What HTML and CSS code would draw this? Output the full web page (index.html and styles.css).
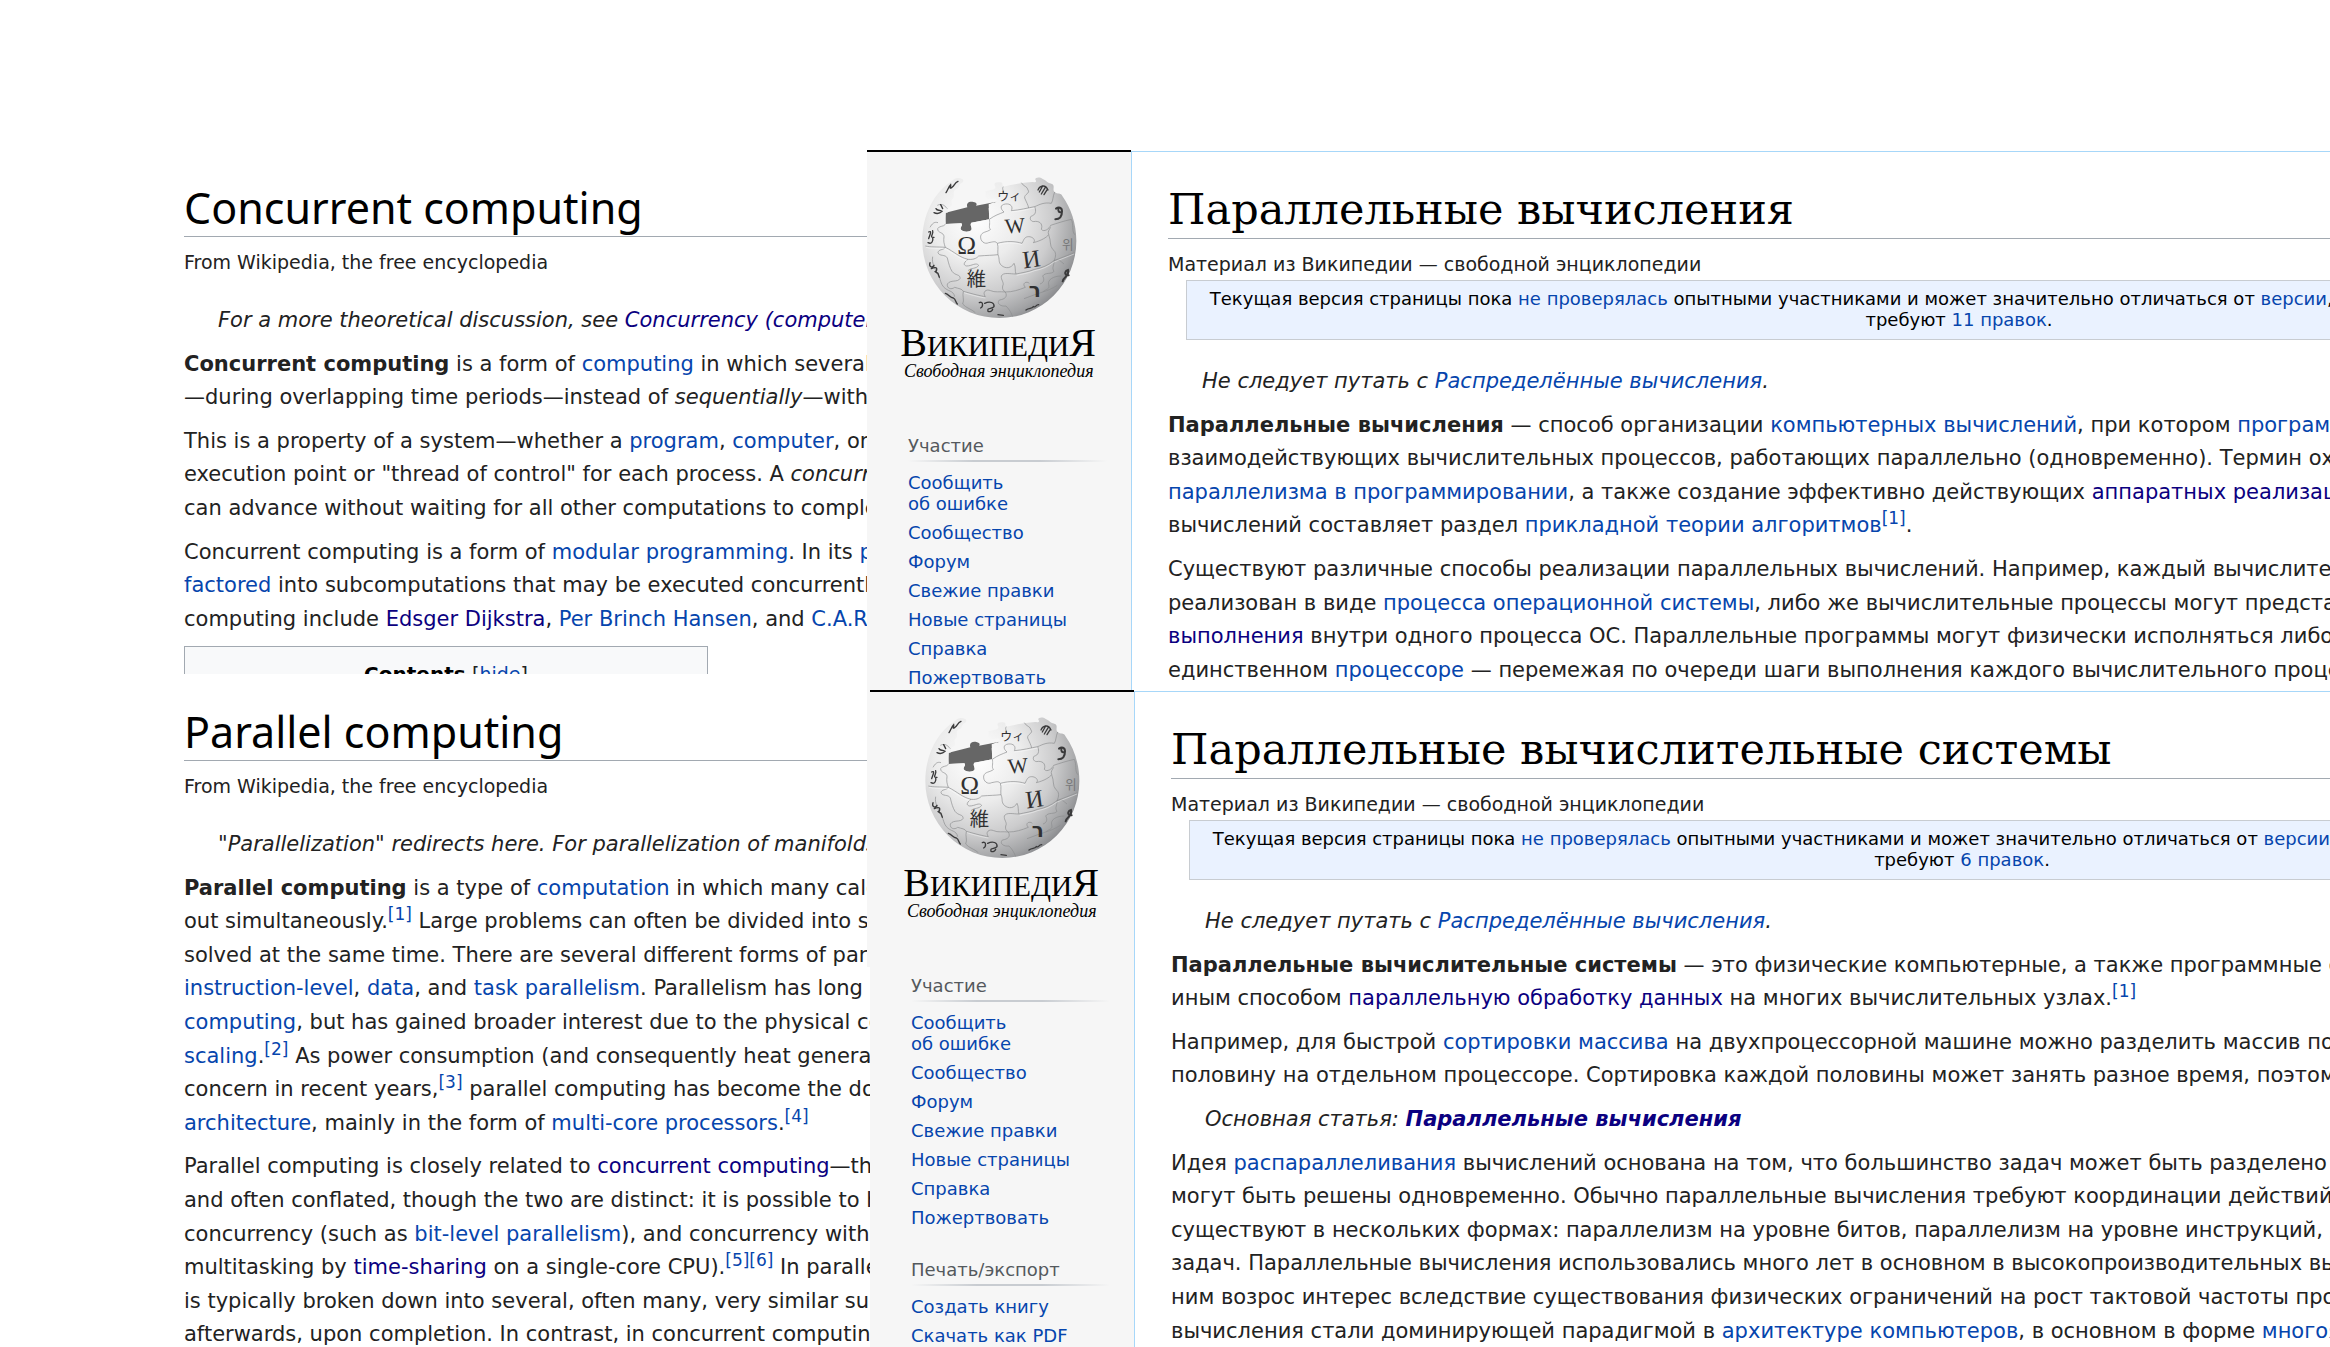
FILE: index.html
```html
<!DOCTYPE html>
<html lang="en">
<head>
<meta charset="utf-8">
<title>Concurrent and parallel computing: English and Russian articles</title>
<link rel="stylesheet" href="styles.css">
</head>
<body>
<svg class="defs" aria-hidden="true">
  <defs>
    <radialGradient id="ball" gradientUnits="userSpaceOnUse" cx="345" cy="235" r="330">
      <stop offset="0" stop-color="#ffffff"/>
      <stop offset=".4" stop-color="#ececec"/>
      <stop offset=".7" stop-color="#cccccd"/>
      <stop offset=".92" stop-color="#a2a3a5"/>
      <stop offset="1" stop-color="#8c8d90"/>
    </radialGradient>
    <symbol id="logo" viewBox="117 108 594 612">
      <path fill="#666" d="M257 218L322 202C318 190 326 184 340 186C350 188 352 192 348 197L410 185L386 205L388 238L334 248C328 256 338 262 334 270C328 278 306 276 302 268C300 260 310 256 304 250L257 252Z"/>
      <path fill="url(#ball)" d="M308 118C296 111 284 113 276 123C222 157 187 225 187 303A231 231 0 0 0 649 303C649 251 633 204 607 168C604 158 592 163 584 156C575 148 588 136 574 131C562 129 562 124 548 117C538 109 524 113 526 119C532 127 524 127 516 126C488 128 458 133 430 140C424 134 432 128 420 127C406 125 400 130 405 138C409 147 402 149 376 154C380 163 370 174 384 177C394 180 408 170 410 181C410 188 404 188 398 188L386 193L388 238L334 248C328 256 338 262 334 270C328 278 306 276 302 268C300 260 310 256 304 250L257 252C254 240 256 226 257 218C270 220 258 206 270 200C284 196 268 184 278 176C288 168 274 156 288 148C300 146 294 134 304 130C310 126 312 122 308 118Z"/>
      <g fill="none" stroke="#8b8c8e" stroke-width="2">
        <path d="M257 252C250 262 238 256 233 266C232 280 252 276 252 290C250 302 252 312 256 322C250 332 236 326 234 338C238 350 256 342 262 354C266 372 270 384 276 394"/>
        <path d="M196 318C212 322 230 320 256 322C284 336 298 352 324 358C344 360 352 352 356 348C380 346 398 346 414 344"/>
        <path d="M388 238C392 252 384 262 392 268C380 278 366 274 362 288C360 304 374 314 386 308C398 306 406 302 412 310C416 322 412 334 414 344C420 358 414 366 424 376C438 388 454 384 462 370C468 380 464 394 468 402"/>
        <path d="M388 238C404 226 418 222 432 216C420 206 420 194 436 192C452 190 460 200 454 212C480 210 502 204 524 200C538 194 552 186 574 190"/>
        <path d="M524 200C530 214 526 226 514 228C506 236 514 248 526 244C544 244 548 256 544 268C552 278 568 266 572 256C590 250 608 244 634 238"/>
        <path d="M412 310C440 302 468 304 486 310C492 298 494 290 506 290C520 290 528 302 520 308C544 302 560 292 566 284C562 276 568 268 572 262"/>
        <path d="M566 284C574 304 568 316 578 328C590 336 588 350 582 362C584 374 574 382 582 394C574 404 556 396 548 408C554 418 552 428 540 432"/>
        <path d="M468 402C486 398 504 396 524 388C546 384 564 376 582 362C602 354 618 348 644 338"/>
        <path d="M324 358C312 366 308 376 320 378C336 378 348 366 356 376C348 388 334 382 324 392M276 394C286 408 302 402 300 416C292 428 272 418 262 432C260 446 274 450 284 442C296 446 306 446 310 454"/>
        <path d="M468 402C450 402 430 396 424 408C422 420 434 428 428 438C426 448 430 452 436 456C458 456 476 450 496 442C484 430 500 422 508 430"/>
        <path d="M310 454C338 462 362 468 376 470C366 456 378 446 392 452C404 458 420 454 436 456C444 470 434 478 418 480C408 492 424 500 438 498C450 510 454 520 458 530"/>
        <path d="M310 454C306 468 314 480 308 492C320 506 334 506 346 518M430 140C424 148 434 154 430 162M484 128C490 140 502 138 504 150C512 160 492 162 494 174C500 188 504 194 506 204M574 190C580 180 578 170 584 156M232 196C244 190 252 194 262 206M210 262C216 252 222 244 234 248M218 350C214 372 226 380 228 398C244 414 238 424 250 440C264 456 280 450 284 470M604 408C582 408 562 418 566 434C570 448 560 446 548 456"/>
        <path d="M582 362C596 356 602 364 612 372M634 238C642 256 634 270 644 284M492 476C510 468 528 464 548 456C562 452 576 446 592 436"/>
      </g>
      <g fill="none" stroke="#fff" stroke-width="2" opacity=".65">
        <path d="M198 322C212 326 230 324 254 326C282 340 296 356 322 362M390 242C396 254 388 264 396 270M414 314C440 306 468 308 486 314M470 406C486 402 504 400 524 392C546 388 564 380 582 366C602 358 618 352 642 342M312 458C338 466 362 472 376 474M454 216C480 214 502 208 524 204"/>
      </g>
      <g fill="none" stroke="#3a3a3b" stroke-width="4" stroke-linecap="round">
        <path d="M258 158C264 148 266 140 272 134C274 142 266 148 276 142C284 136 284 128 294 124"/>
        <path d="M222 218C230 222 238 222 246 214C238 208 232 214 228 206M242 194L248 206"/>
        <path d="M206 276C218 270 208 288 206 296M218 272C222 282 206 294 222 292M204 308C216 314 220 302 218 292"/>
        <path d="M210 368C206 380 216 386 222 376M214 386C222 382 232 380 230 390C228 400 218 390 234 400L238 412"/>
        <path d="M256 460C266 462 270 474 280 474C288 478 286 486 292 492"/>
        <path d="M358 488C370 482 370 500 362 504M374 490C390 482 404 488 402 500C396 508 380 502 384 514C390 516 396 514 398 508"/>
        <path d="M538 156L548 138M544 162L556 142M552 164L562 148M534 150C540 136 556 132 564 150"/>
        <path stroke-width="6" d="M588 206C596 200 606 202 606 214C606 230 600 238 586 238M596 204C592 214 598 218 604 216"/>
        <path stroke-width="6" d="M608 424C610 412 618 416 620 404C612 402 616 392 624 390C626 400 620 406 626 406"/>
        <path d="M498 510C508 502 514 508 520 500C528 504 526 494 536 494M414 524L430 526"/>
      </g>
      <g class="logo-glyphs" fill="#303031">
        <text x="292" y="341" font-size="76">Ω</text>
        <text x="434" y="279" font-size="64" transform="rotate(-5 465 255)">W</text>
        <text x="488" y="382" font-size="74" transform="rotate(-8 515 358)">И</text>
        <text class="logo-cjk" x="320" y="438" font-size="58">維</text>
        <text class="logo-cjk" x="412" y="182" font-size="36">ウィ</text>
        <text class="logo-sans" x="506" y="470" font-size="60">ר</text>
        <text class="logo-kr" x="606" y="326" font-size="38" fill="#77787a">위</text>
      </g>
      <g class="logo-name">
        <text x="121" y="647" font-size="120">В<tspan font-size="88">ИКИПЕДИ</tspan>Я</text>
        <text class="logo-motto" x="132" y="711" font-size="54">Свободная энциклопедия</text>
      </g>
    </symbol>
  </defs>
</svg>

<main class="board">
  <div class="column column-en">
    <article class="capture capture-en capture-first">
      <h1>Concurrent computing</h1>
      <p class="source">From Wikipedia, the free encyclopedia</p>
      <p class="hatnote">For a more theoretical discussion, see <a class="seen" href="#">Concurrency (computer science)</a>.</p>
      <p><b>Concurrent computing</b> is a form of <a href="#">computing</a> in which several<br>
      —during overlapping time periods—instead of <i>sequentially</i>—with<br></p>
      <p>This is a property of a system—whether a <a href="#">program</a>, <a href="#">computer</a>, or<br>
      execution point or "thread of control" for each process. A <i>concurrent</i><br>
      can advance without waiting for all other computations to complete.</p>
      <p>Concurrent computing is a form of <a href="#">modular programming</a>. In its <a href="#">paradigm</a><br>
      <a href="#">factored</a> into subcomputations that may be executed concurrently.<br>
      computing include <a class="seen" href="#">Edsger Dijkstra</a>, <a href="#">Per Brinch Hansen</a>, and <a href="#">C.A.R. Hoare</a>.</p>
      <div class="toc"><b>Contents</b> <span>[<a href="#">hide</a>]</span></div>
    </article>
    <article class="capture capture-en capture-last">
      <h1>Parallel computing</h1>
      <p class="source">From Wikipedia, the free encyclopedia</p>
      <p class="hatnote">"Parallelization" redirects here. For parallelization of manifolds,</p>
      <p><b>Parallel computing</b> is a type of <a href="#">computation</a> in which many calculations<br>
      out simultaneously.<sup><a href="#">[1]</a></sup> Large problems can often be divided into smaller<br>
      solved at the same time. There are several different forms of parallel<br>
      <a href="#">instruction-level</a>, <a href="#">data</a>, and <a href="#">task parallelism</a>. Parallelism has long<br>
      <a href="#">computing</a>, but has gained broader interest due to the physical constraints<br>
      <a href="#">scaling</a>.<sup><a href="#">[2]</a></sup> As power consumption (and consequently heat generation)<br>
      concern in recent years,<sup><a href="#">[3]</a></sup> parallel computing has become the dominant<br>
      <a href="#">architecture</a>, mainly in the form of <a href="#">multi-core processors</a>.<sup><a href="#">[4]</a></sup></p>
      <p>Parallel computing is closely related to <a class="seen" href="#">concurrent computing</a>—they<br>
      and often conflated, though the two are distinct: it is possible to have<br>
      concurrency (such as <a href="#">bit-level parallelism</a>), and concurrency without<br>
      multitasking by <a class="seen" href="#">time-sharing</a> on a single-core CPU).<sup><a href="#">[5]</a><a href="#">[6]</a></sup> In parallel<br>
      is typically broken down into several, often many, very similar subtasks<br>
      afterwards, upon completion. In contrast, in concurrent computing,</p>
    </article>
  </div>

  <div class="column column-ru" lang="ru">
    <section class="capture capture-ru capture-first">
      <nav class="side" aria-label="Участие">
        <svg class="logo" role="img" aria-label="Википедия"><use href="#logo"/></svg>
        <h2>Участие</h2>
        <ul>
          <li><a href="#">Сообщить<br>об ошибке</a></li>
          <li><a href="#">Сообщество</a></li>
          <li><a href="#">Форум</a></li>
          <li><a href="#">Свежие правки</a></li>
          <li><a href="#">Новые страницы</a></li>
          <li><a href="#">Справка</a></li>
          <li><a href="#">Пожертвовать</a></li>
        </ul>
      </nav>
      <article class="content">
        <h1>Параллельные вычисления</h1>
        <p class="source">Материал из Википедии — свободной энциклопедии</p>
        <div class="notice">Текущая версия страницы пока <a href="#">не проверялась</a> опытными участниками и может значительно отличаться от <a href="#">версии</a>, проверенной 25 марта 2017; проверки<br>требуют <a href="#">11 правок</a>.</div>
        <p class="hatnote">Не следует путать с <a href="#">Распределённые вычисления</a>.</p>
        <p><b>Параллельные вычисления</b> — способ организации <a href="#">компьютерных вычислений</a>, при котором <a href="#">программы</a><br>
        взаимодействующих вычислительных процессов, работающих параллельно (одновременно). Термин охватывает<br>
        <a href="#">параллелизма в программировании</a>, а также создание эффективно действующих <a class="seen" href="#">аппаратных реализаций</a>.<br>
        вычислений составляет раздел <a href="#">прикладной теории алгоритмов</a><sup><a href="#">[1]</a></sup>.</p>
        <p>Существуют различные способы реализации параллельных вычислений. Например, каждый вычислительный<br>
        реализован в виде <a href="#">процесса операционной системы</a>, либо же вычислительные процессы могут представлять<br>
        <a class="seen" href="#">выполнения</a> внутри одного процесса ОС. Параллельные программы могут физически исполняться либо<br>
        единственном <a href="#">процессоре</a> — перемежая по очереди шаги выполнения каждого вычислительного процесса,</p>
      </article>
    </section>
    <section class="capture capture-ru capture-last">
      <nav class="side" aria-label="Участие и печать">
        <svg class="logo" role="img" aria-label="Википедия"><use href="#logo"/></svg>
        <h2>Участие</h2>
        <ul>
          <li><a href="#">Сообщить<br>об ошибке</a></li>
          <li><a href="#">Сообщество</a></li>
          <li><a href="#">Форум</a></li>
          <li><a href="#">Свежие правки</a></li>
          <li><a href="#">Новые страницы</a></li>
          <li><a href="#">Справка</a></li>
          <li><a href="#">Пожертвовать</a></li>
        </ul>
        <h2>Печать/экспорт</h2>
        <ul>
          <li><a href="#">Создать книгу</a></li>
          <li><a href="#">Скачать как PDF</a></li>
        </ul>
      </nav>
      <article class="content">
        <h1>Параллельные вычислительные системы</h1>
        <p class="source">Материал из Википедии — свободной энциклопедии</p>
        <div class="notice">Текущая версия страницы пока <a href="#">не проверялась</a> опытными участниками и может значительно отличаться от <a href="#">версии</a>, проверенной 25 марта 2015; проверки<br>требуют <a href="#">6 правок</a>.</div>
        <p class="hatnote">Не следует путать с <a href="#">Распределённые вычисления</a>.</p>
        <p><b>Параллельные вычислительные системы</b> — это физические компьютерные, а также программные системы<br>
        иным способом <a class="seen" href="#">параллельную обработку данных</a> на многих вычислительных узлах.<sup><a href="#">[1]</a></sup></p>
        <p>Например, для быстрой <a href="#">сортировки массива</a> на двухпроцессорной машине можно разделить массив пополам<br>
        половину на отдельном процессоре. Сортировка каждой половины может занять разное время, поэтому</p>
        <p class="hatnote">Основная статья: <a class="seen" href="#"><b>Параллельные вычисления</b></a></p>
        <p>Идея <a href="#">распараллеливания</a> вычислений основана на том, что большинство задач может быть разделено на<br>
        могут быть решены одновременно. Обычно параллельные вычисления требуют координации действий.<br>
        существуют в нескольких формах: параллелизм на уровне битов, параллелизм на уровне инструкций, данных<br>
        задач. Параллельные вычисления использовались много лет в основном в высокопроизводительных вычислениях<br>
        ним возрос интерес вследствие существования физических ограничений на рост тактовой частоты процессоров<br>
        вычисления стали доминирующей парадигмой в <a href="#">архитектуре компьютеров</a>, в основном в форме <a href="#">многоядерных</a></p>
      </article>
    </section>
  </div>
</main>
</body>
</html>
```
FILE: styles.css
```css
* {
  box-sizing: border-box;
}

body {
  margin: 0;
  background: #fff;
  color: #222;
  font: 21px/1.6 "DejaVu Sans", sans-serif;
}

a {
  color: #0645ad;
  text-decoration: none;
}

a.seen {
  color: #0b0080;
}

.defs {
  position: absolute;
  width: 0;
  height: 0;
}

/* Board: two columns of stacked page captures */
.board {
  display: grid;
  grid-template-columns: minmax(0, 867fr) minmax(0, 1463fr);
  height: 100vh;
  padding-top: 150px;
  overflow: hidden;
}

.column {
  display: flex;
  flex-direction: column;
  min-height: 0;
}

.capture {
  overflow: hidden;
  white-space: nowrap;
}

.capture-last {
  flex: 1;
  min-height: 0;
}

/* Article text */
h1 {
  margin: 0 0 13px;
  padding-bottom: 4px;
  border-bottom: 1px solid #a2a9b1;
  color: #000;
  font: 43px/48px "Noto Sans", sans-serif;
}

p {
  margin: 0 0 10px;
}

.source {
  margin: 0;
  font-size: 19px;
  line-height: 24px;
}

.hatnote {
  padding-left: 34px;
  font-style: italic;
}

sup {
  font-size: 17px;
  line-height: 1;
}

/* English captures */
.capture-en {
  padding: 34px 0 0 184px;
}

.source + .hatnote {
  margin-top: 30px;
}

.capture-en.capture-first {
  height: 524px;
}

.capture-en.capture-last {
  margin-right: -3px;
}

.toc {
  width: 524px;
  padding: 12px;
  border: 1px solid #a2a9b1;
  background: #f8f9fa;
  font-size: 20px;
  line-height: 30px;
  text-align: center;
}

.toc b {
  color: #000;
}

.toc span {
  font-size: 19px;
}

/* Russian captures */
.capture-ru {
  display: flex;
}

.capture-ru.capture-first {
  height: 540px;
}

.capture-ru.capture-last {
  margin-left: 3px;
}

/* Edge of the upper capture showing beside the lower one */
.column-ru {
  position: relative;
}

.column-ru::after {
  content: "";
  position: absolute;
  top: 540px;
  left: 0;
  width: 3px;
  height: 277px;
  background: #f6f6f6;
}

.side {
  flex: none;
  width: 264px;
  padding: 24px 24px 0 41px;
  border-top: 2px solid #000;
  background: #f6f6f6;
  font-size: 18px;
  line-height: 21px;
}

.logo {
  display: block;
  width: 198px;
  height: 204px;
  margin: 0 0 54px -9px;
}

.logo-glyphs,
.logo-name {
  font-family: "Liberation Serif", serif;
}

.logo-cjk {
  font-family: "Noto Sans CJK JP", sans-serif;
}

.logo-kr {
  font-family: "Noto Sans CJK KR", sans-serif;
}

.logo-sans {
  font-family: "DejaVu Sans", sans-serif;
  font-weight: bold;
}

.logo-motto {
  font-style: italic;
}

.side h2 {
  margin: 0;
  padding-bottom: 4px;
  background: linear-gradient(to right, transparent, #c8ccd1 33%, #c8ccd1 66%, transparent) bottom / 100% 2px no-repeat;
  color: #54595d;
  font-size: 18px;
  font-weight: normal;
  line-height: 24px;
}

.side ul {
  margin: 0 0 26px;
  padding: 6px 0 0;
  list-style: none;
}

.side li {
  padding: 4px 0;
}

.content {
  flex: 1 0 1619px;
  margin-top: 1px;
  padding: 31px 0 0 36px;
  border: solid #a7d7f9;
  border-width: 1px 0 0 1px;
}

.content h1 {
  padding-bottom: 3px;
  font: 43px/52px "DejaVu Serif", serif;
}

.notice {
  margin: 4px 18px 25px;
  padding: 7px 0 9px;
  border: 1px solid #c8ccd1;
  background: #eaf2ff;
  color: #000;
  font-size: 18px;
  line-height: 21px;
  text-align: center;
}
```
